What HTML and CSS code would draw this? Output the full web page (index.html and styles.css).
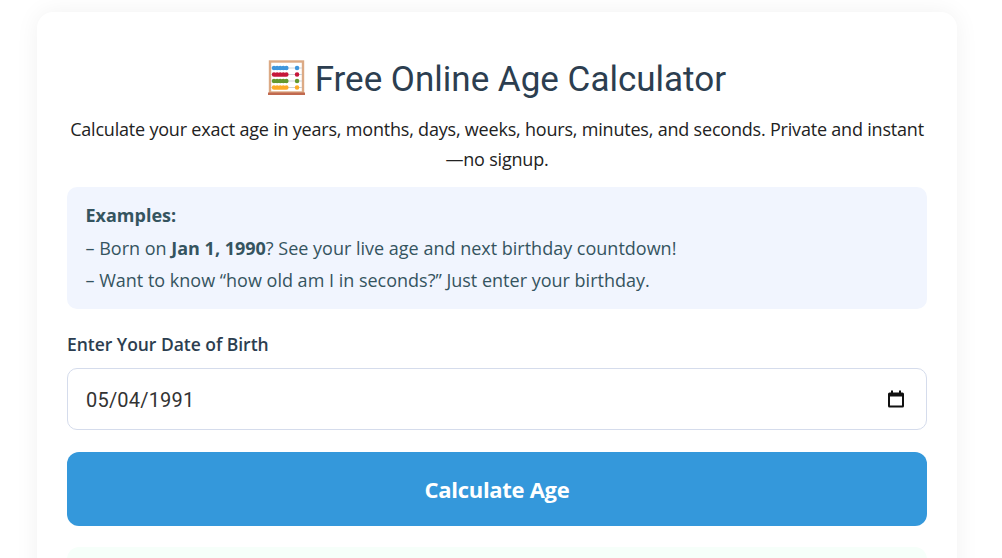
FILE: index.html
```html
<!DOCTYPE html>
<html lang="en">
  <head>
    <meta charset="utf-8">
    <title>Free Online Age Calculator</title>
    <link rel="stylesheet" href="styles.css">
  </head>
  <body>
    <div class="page">
      <div class="card">
        <h1 class="title">
          <svg class="abacus" width="37" height="36" viewBox="0 0 37 36">
            <rect x="2" y="1.500" width="33" height="31" fill="#fff" stroke="#dcaa85" stroke-width="2.400"/>
            <path d="M3 8h31M3 14.500h31M3 21h31M3 27.500h31" stroke="#cdd3d8" stroke-width="1"/>
            <g stroke-linecap="round" stroke-width="4.400" stroke-dasharray="0 3.100" fill="none">
              <path d="M6 8h13" stroke="#3f96dc"/>
              <path d="M6 14.500h13" stroke="#c6173a"/>
              <path d="M6 21h13" stroke="#64982f"/>
              <path d="M6 27.500h13" stroke="#fcab27"/>
            </g>
            <g stroke-linecap="round" stroke-width="4.400" fill="none">
              <path d="M29 8h0.100" stroke="#3f96dc"/>
              <path d="M29 14.500h0.100" stroke="#c6173a"/>
              <path d="M29 21h0.100" stroke="#64982f"/>
              <path d="M29 27.500h0.100" stroke="#fcab27"/>
            </g>
            <rect x="0" y="32.500" width="37" height="2.500" fill="#c1694f"/>
          </svg>
          Free Online Age Calculator
        </h1>
        <p class="intro">Calculate your exact age in years, months, days, weeks, hours, minutes, and seconds. Private and instant —no signup.</p>

        <div class="examples">
          <div class="examplesHead"><b>Examples:</b></div>
          <div>– Born on <b>Jan 1, 1990</b>? See your live age and next birthday countdown!</div>
          <div>– Want to know “how old am I in seconds?” Just enter your birthday.</div>
        </div>

        <label class="dobLabel" for="dob">Enter Your Date of Birth</label>
        <div class="dobInput" id="dob">
          <span class="dobValue">05/04/1991</span>
          <svg width="20" height="20" viewBox="0 0 20 20">
            <path d="M5 1.500h2v2h6v-2h2v2h1.500A1.500 1.500 0 0 1 18 5v12a1.500 1.500 0 0 1-1.500 1.500h-13A1.500 1.500 0 0 1 2 17V5a1.500 1.500 0 0 1 1.500-1.500H5zM4 7.500V16.500h12V7.500z" fill="#111"/>
          </svg>
        </div>

        <button class="calcBtn">Calculate Age</button>

        <div class="result"></div>
      </div>
    </div>
  </body>
</html>
```

FILE: styles.css
```css
html, body {
  margin: 0;
  height: 558px;
  overflow: hidden;
  background: #fff;
}

.page {
  width: 994px;
  padding-top: 12px;
  box-sizing: border-box;
}

.card {
  width: 860px;
  margin: 0 auto;
  padding: 40px 30px 30px;
  background: #fff;
  border-radius: 16px;
  box-shadow: 0 0 24px rgba(0, 0, 0, 0.06);
  font-family: "Open Sans", "Noto Sans", sans-serif;
  color: #2c3e50;
}

.title {
  margin: 0;
  font-family: Roboto, sans-serif;
  font-size: 35px;
  font-weight: 400;
  line-height: 56px;
  text-align: center;
}

.abacus {
  vertical-align: -5px;
  margin-right: 1px;
}

.intro {
  margin: 6px 0 13px;
  font-size: 18px;
  line-height: 30px;
  text-align: center;
  color: #222;
  letter-spacing: -0.2px;
}

.examples {
  padding: 13px 19px 13px 18.500px;
  background: #f1f5fe;
  border-radius: 10px;
  font-size: 18px;
  line-height: 32px;
  color: #35545f;
}

.examplesHead {
  margin: -1px 0 1px;
}

.dobLabel {
  display: block;
  margin: 20px 0 9px;
  font-size: 17.500px;
  font-weight: 600;
  line-height: 30px;
  letter-spacing: -0.03px;
}

.dobInput {
  display: flex;
  justify-content: space-between;
  align-items: center;
  height: 60px;
  padding: 0 20px 0 18px;
  background: #fff;
  border: 1px solid #d5dcec;
  border-radius: 10px;
  font-family: Roboto, sans-serif;
  font-size: 20px;
  color: #333;
  letter-spacing: 0.2px;
}

.dobValue {
  margin-top: 2px;
}

.calcBtn {
  display: block;
  width: 100%;
  height: 74px;
  margin-top: 22px;
  background: #3498db;
  border: 0;
  border-radius: 12px;
  font-family: "Open Sans", sans-serif;
  font-size: 22px;
  font-weight: 700;
  color: #fff;
  letter-spacing: -0.3px;
}

.result {
  height: 60px;
  margin-top: 21px;
  background: #f6fffa;
  border-radius: 12px;
}
```
